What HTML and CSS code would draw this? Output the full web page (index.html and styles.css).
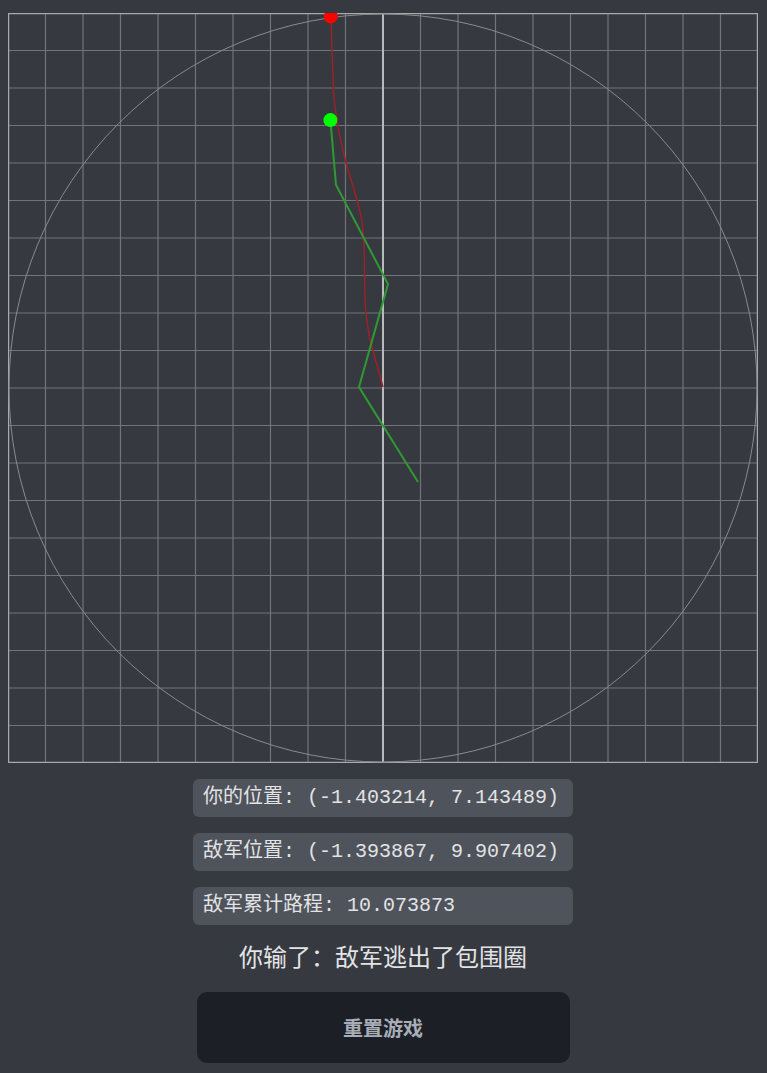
FILE: index.html
```html
<!DOCTYPE html>
<html lang="zh">
<head>
<meta charset="utf-8">
<title>包围圈</title>
<link rel="stylesheet" href="styles.css">
</head>
<body>
<div class="app">
  <svg class="board" width="750" height="750" viewBox="0 0 750 750">
    <g class="grid">
      <line x1="37.5" y1="0" x2="37.5" y2="750"/><line x1="75" y1="0" x2="75" y2="750"/>
      <line x1="112.5" y1="0" x2="112.5" y2="750"/><line x1="150" y1="0" x2="150" y2="750"/>
      <line x1="187.5" y1="0" x2="187.5" y2="750"/><line x1="225" y1="0" x2="225" y2="750"/>
      <line x1="262.5" y1="0" x2="262.5" y2="750"/><line x1="300" y1="0" x2="300" y2="750"/>
      <line x1="337.5" y1="0" x2="337.5" y2="750"/>
      <line x1="412.5" y1="0" x2="412.5" y2="750"/><line x1="450" y1="0" x2="450" y2="750"/>
      <line x1="487.5" y1="0" x2="487.5" y2="750"/><line x1="525" y1="0" x2="525" y2="750"/>
      <line x1="562.5" y1="0" x2="562.5" y2="750"/><line x1="600" y1="0" x2="600" y2="750"/>
      <line x1="637.5" y1="0" x2="637.5" y2="750"/><line x1="675" y1="0" x2="675" y2="750"/>
      <line x1="712.5" y1="0" x2="712.5" y2="750"/>
      <line y1="37.5" x1="0" y2="37.5" x2="750"/><line y1="75" x1="0" y2="75" x2="750"/>
      <line y1="112.5" x1="0" y2="112.5" x2="750"/><line y1="150" x1="0" y2="150" x2="750"/>
      <line y1="187.5" x1="0" y2="187.5" x2="750"/><line y1="225" x1="0" y2="225" x2="750"/>
      <line y1="262.5" x1="0" y2="262.5" x2="750"/><line y1="300" x1="0" y2="300" x2="750"/>
      <line y1="337.5" x1="0" y2="337.5" x2="750"/><line y1="375" x1="0" y2="375" x2="750"/>
      <line y1="412.5" x1="0" y2="412.5" x2="750"/><line y1="450" x1="0" y2="450" x2="750"/>
      <line y1="487.5" x1="0" y2="487.5" x2="750"/><line y1="525" x1="0" y2="525" x2="750"/>
      <line y1="562.5" x1="0" y2="562.5" x2="750"/><line y1="600" x1="0" y2="600" x2="750"/>
      <line y1="637.5" x1="0" y2="637.5" x2="750"/><line y1="675" x1="0" y2="675" x2="750"/>
      <line y1="712.5" x1="0" y2="712.5" x2="750"/>
    </g>
    <line class="axis" x1="375" y1="0" x2="375" y2="750"/>
    <rect class="frame" x="0.5" y="0.5" width="749" height="749"/>
    <circle class="ring" cx="375" cy="375" r="374"/>
    <polyline class="enemy-path" points="375,374 362,327 358,302 357,287 356,232 354,207 349,187 338,150 331,120 326,87 324,37 323,4"/>
    <polyline class="player-path" points="410,469 351,374 380,271 328,172 322.4,107.1"/>
    <circle class="enemy" cx="322.7" cy="3.5" r="7"/>
    <circle class="player" cx="322.4" cy="107.1" r="7"/>
  </svg>
  <div class="info">你的位置: (-1.403214, 7.143489)</div>
  <div class="info">敌军位置: (-1.393867, 9.907402)</div>
  <div class="info">敌军累计路程: 10.073873</div>
  <div class="result">你输了：敌军逃出了包围圈</div>
  <button class="reset">重置游戏</button>
</div>
</body>
</html>
```
FILE: styles.css
```css
html, body {
  margin: 0;
  padding: 0;
  background: #36393f;
}
.app {
  width: 750px;
  margin: 13px 8px 0 8px;
  display: flex;
  flex-direction: column;
  align-items: center;
  gap: 16px;
}
.board {
  display: block;
}
.grid line {
  stroke: #727479;
  stroke-width: 1.2;
}
.axis {
  stroke: #b9babc;
  stroke-width: 2;
}
.frame {
  fill: none;
  stroke: #a8a9ab;
  stroke-width: 1.5;
}
.ring {
  fill: none;
  stroke: #8a8b8e;
  stroke-width: 1;
}
.enemy-path {
  fill: none;
  stroke: #9a2228;
  stroke-width: 1.5;
}
.player-path {
  fill: none;
  stroke: #2f9a34;
  stroke-width: 2;
}
.enemy { fill: #ff0000; }
.player { fill: #00ff00; }
.info {
  box-sizing: border-box;
  width: 380px;
  height: 38px;
  padding: 0 10px;
  border-radius: 6px;
  background: #4f535b;
  color: #e2e3e5;
  font-family: "Liberation Mono", "Noto Sans CJK SC", monospace;
  font-size: 20px;
  line-height: 37px;
  white-space: nowrap;
}
.result {
  color: #e2e3e5;
  font-family: "Noto Sans CJK SC", sans-serif;
  font-size: 24px;
  line-height: 30px;
  padding-bottom: 5px;
}
.reset {
  width: 373px;
  height: 71px;
  border: none;
  border-radius: 10px;
  background: #1d1f26;
  color: #a8adb7;
  font-family: "Noto Sans CJK SC", sans-serif;
  font-weight: 700;
  font-size: 20px;
}
```
